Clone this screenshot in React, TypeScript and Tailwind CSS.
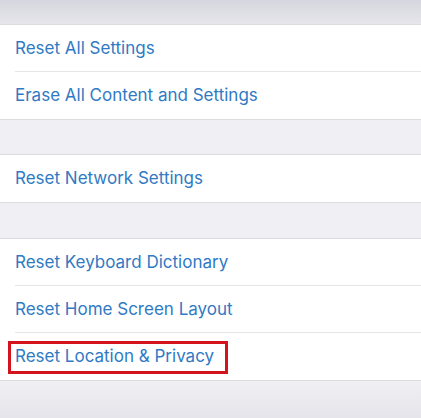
import React from 'react';

function Row({ label, last, highlight }: { label: string; last?: boolean; highlight?: boolean }) {
  return (
    <div className="relative h-[47px] pl-[15px] flex items-center">
      {highlight && (
        <div className="absolute left-[8px] top-[8px] w-[220px] h-[33px] border-[3px] border-[#d3141c]" />
      )}
      <span className="text-[17px] text-[#2f7ac4]">{label}</span>
      {!last && <div className="absolute left-[15px] right-0 bottom-0 h-px bg-[#e6e6ea]" />}
    </div>
  );
}

function Group({ items, highlightLast }: { items: string[]; highlightLast?: boolean }) {
  return (
    <div className="bg-white border-y border-[#dcdce0]">
      {items.map((label, i) => (
        <Row
          key={label}
          label={label}
          last={i === items.length - 1}
          highlight={highlightLast && i === items.length - 1}
        />
      ))}
    </div>
  );
}

export default function App() {
  return (
    <div
      className="w-[421px] h-[418px] overflow-hidden bg-[#efeff4]"
      style={{ fontFamily: 'Inter, "Liberation Sans", sans-serif' }}
    >
      <div className="h-[24px] bg-gradient-to-b from-[#d6d6de] to-[#e6e6ec]" />
      <Group items={['Reset All Settings', 'Erase All Content and Settings']} />
      <div className="h-[34px]" />
      <Group items={['Reset Network Settings']} />
      <div className="h-[35px]" />
      <Group items={['Reset Keyboard Dictionary', 'Reset Home Screen Layout', 'Reset Location & Privacy']} highlightLast />
      <div className="h-[40px] bg-gradient-to-b from-[#efeff4] to-[#e4e4ea]" />
    </div>
  );
}
